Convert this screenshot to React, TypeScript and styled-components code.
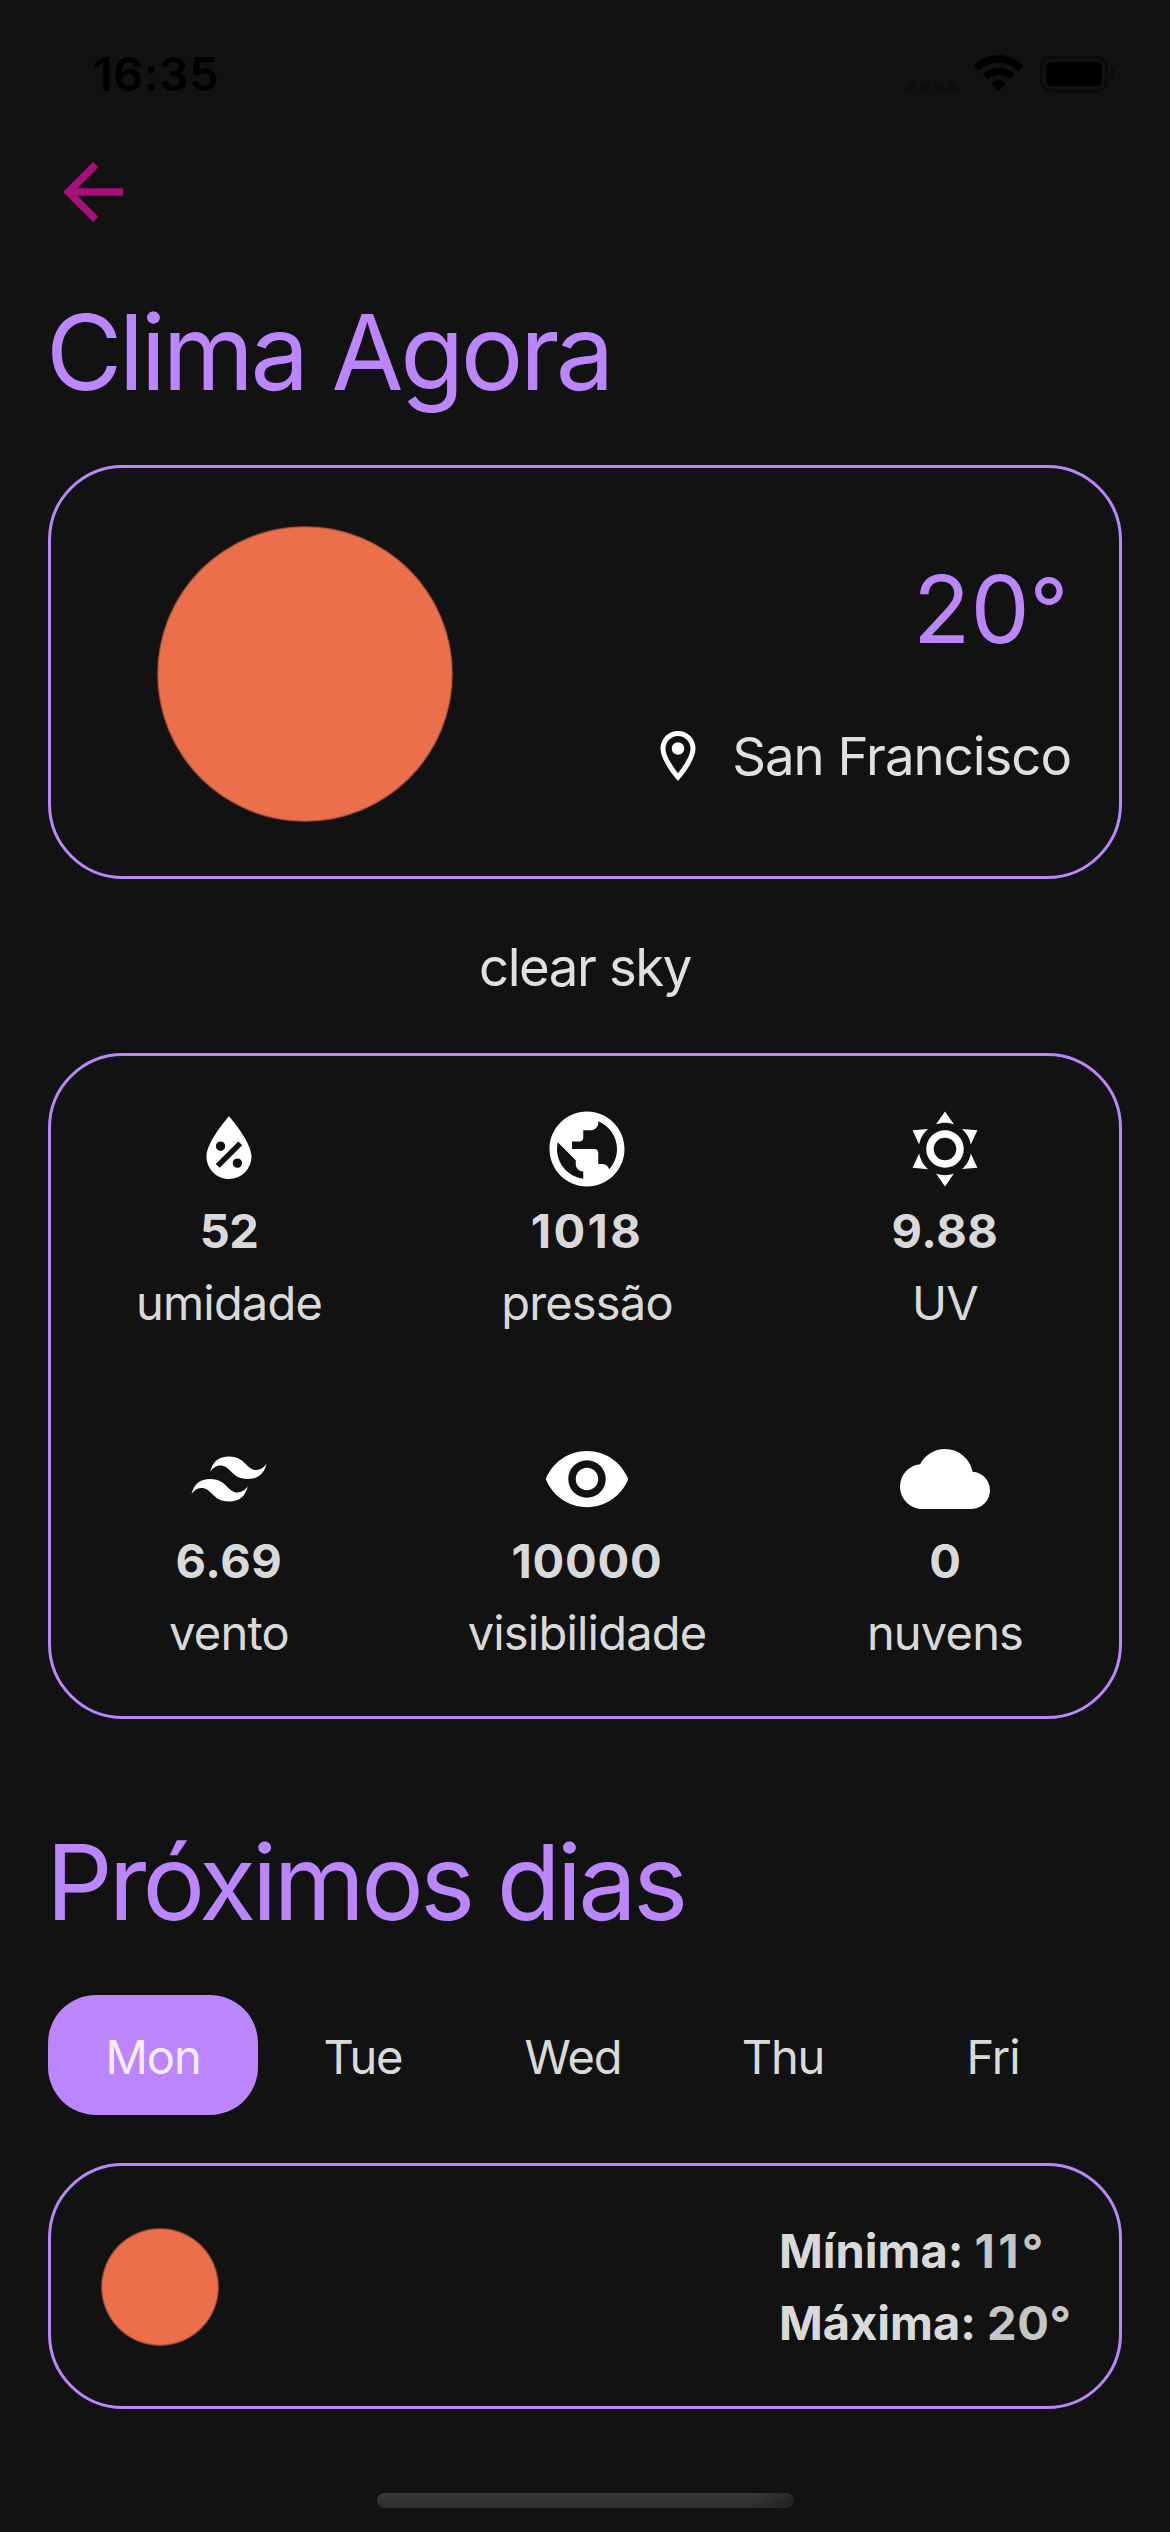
import React from "react";
import styled, { createGlobalStyle } from "styled-components";
import { MdArrowBack, MdCloud, MdOutlineLocationOn, MdPublic, MdVisibility } from "react-icons/md";

const accent = "#bb86fc";
const ink = "rgba(255, 255, 255, 0.87)";

const GlobalStyle = createGlobalStyle`
  * { box-sizing: border-box; }
  body { margin: 0; background: #121212; }
`;

const Screen = styled.main`
  display: flex;
  flex-direction: column;
  width: 1170px;
  height: 2532px;
  overflow: hidden;
  background: #121212;
  color: ${ink};
  font-family: Inter, "Liberation Sans", sans-serif;
  font-size: 47px;
`;

const StatusBar = styled.header`
  display: flex;
  align-items: center;
  justify-content: space-between;
  height: 147px;
  padding: 0 55px 0 93px;
  color: #000;
`;

const Clock = styled.time`
  font-size: 47px;
  font-weight: 600;
  letter-spacing: 0.3px;
  line-height: 58px;
  padding-top: 1px;
`;

const StatusIcons = styled.div`
  display: flex;
  align-items: center;
  gap: 17px;
`;

const Content = styled.div`
  display: flex;
  flex-direction: column;
  padding: 0 48px;
`;

const BackButton = styled.button`
  display: flex;
  width: 90px;
  height: 90px;
  padding: 0;
  border: 0;
  background: none;
  color: #a80f7b;
`;

const Title = styled.h1<{ $top: number; $tracking: number }>`
  margin: ${(p) => p.$top}px 0 48px -2px;
  color: ${accent};
  font-size: 104.5px;
  font-weight: 400;
  letter-spacing: ${(p) => p.$tracking}px;
  line-height: 130px;
`;

const Card = styled.section`
  display: flex;
  border: 3px solid ${accent};
  border-radius: 75px;
`;

const CurrentCard = styled(Card)`
  align-items: center;
  justify-content: space-between;
  height: 414px;
  padding: 4px 48px 0 106px;
`;

const Sun = styled.div<{ $size: number }>`
  width: ${(p) => p.$size}px;
  height: ${(p) => p.$size}px;
  border-radius: 50%;
  background: radial-gradient(closest-side, #eb6f4b calc(100% - 2px), rgba(235, 111, 75, 0.4) 100%);
`;

const CurrentInfo = styled.div`
  display: flex;
  flex-direction: column;
  align-items: flex-end;
  gap: 58px;
  margin-bottom: 8px;
`;

const Temperature = styled.div`
  padding-right: 3px;
  color: ${accent};
  font-size: 94px;
  line-height: 114px;
`;

const Degree = styled.span`
  font-size: 84px;
  line-height: 0;
  vertical-align: 4px;
`;

const Place = styled.div`
  display: flex;
  align-items: center;
  gap: 24px;
  font-size: 52.7px;
  letter-spacing: -1px;
  line-height: 64px;

  svg { color: #fff; }
`;

const Description = styled.p`
  display: flex;
  align-items: center;
  justify-content: center;
  height: 174px;
  margin: 0;
  padding-top: 1px;
  font-size: 52.7px;
  letter-spacing: -1.4px;
`;

const StatsCard = styled(Card)`
  display: grid;
  grid-template-columns: repeat(3, 358px);
  grid-auto-rows: 330px;
  height: 666px;
  padding-top: 48px;
`;

const Stat = styled.div`
  display: flex;
  flex-direction: column;
  align-items: center;
  margin-left: -2px;
  line-height: 72px;

  svg { color: #fff; fill: currentColor; }
`;

const StatValue = styled.strong<{ $tracking: number }>`
  margin-top: 1px;
  font-weight: 700;
  letter-spacing: ${(p) => p.$tracking}px;
`;

const StatLabel = styled.span`
  letter-spacing: -0.8px;
`;

const Days = styled.nav`
  display: flex;
  margin-bottom: 48px;
`;

const Day = styled.button<{ $active: boolean }>`
  width: 210px;
  height: 120px;
  padding: 2px 0 0;
  border: 0;
  border-radius: 48px;
  background: ${(p) => (p.$active ? accent : "transparent")};
  color: ${ink};
  font: inherit;
  letter-spacing: -1.1px;
`;

const ForecastCard = styled(Card)`
  align-items: center;
  justify-content: space-between;
  height: 246px;
  padding: 2px 47px 0 50px;
`;

const Range = styled.div`
  width: 293px;
  font-weight: 700;
  line-height: 72px;
`;

const RangeRow = styled.div`
  white-space: pre;
`;

const RangeValue = styled.span<{ $tracking: number }>`
  color: #c5c5c5;
  letter-spacing: ${(p) => p.$tracking}px;
`;

const HomeIndicator = styled.div`
  width: 417px;
  height: 15px;
  margin: 84px auto 0;
  border-radius: 8px;
  background:
    linear-gradient(to right, rgba(18, 18, 18, 0) 90%, rgba(18, 18, 18, 0.45)),
    linear-gradient(#3a3a3a, #2d2d2d);
`;

const SignalDots = () => (
  <svg width="51" height="36" viewBox="0 0 51 36" fill="#0e0e0e">
    {[0, 14, 28, 42].map((x) => (
      <rect key={x} x={x} y="26.500" width="9" height="9" rx="3" />
    ))}
  </svg>
);

const Wifi = () => (
  <svg width="49" height="37" viewBox="0 0 49 37" fill="#000">
    <path d="M24.500 0C33.800 0 42.300 3.800 48.800 10.400a.9.900 0 0 1 0 1.300L45 15.600a.9.900 0 0 1-1.300 0A27.500 27.500 0 0 0 24.500 7.800 27.500 27.500 0 0 0 5.300 15.600a.9.900 0 0 1-1.300 0L.2 11.700a.9.900 0 0 1 0-1.300C6.700 3.800 15.200 0 24.500 0Z" />
    <path d="M24.500 12.800c5.900 0 11.300 2.200 15.300 6.100a.9.900 0 0 1 0 1.300L36 24a.9.900 0 0 1-1.300 0A15 15 0 0 0 24.500 20.100 15 15 0 0 0 14.300 24a.9.900 0 0 1-1.300 0L9.200 20.200a.9.900 0 0 1 0-1.300c4-3.900 9.400-6.100 15.300-6.100Z" />
    <path d="M24.500 25.300c2.600 0 4.900.9 6.700 2.400a.9.900 0 0 1 0 1.400l-6.100 6.400a.9.900 0 0 1-1.300 0l-6.100-6.400a.9.900 0 0 1 0-1.400c1.900-1.500 4.200-2.400 6.800-2.400Z" />
  </svg>
);

const Battery = () => (
  <svg width="75" height="36" viewBox="0 0 75 36">
    <rect x="1.500" y="1.500" width="65" height="33" rx="9.500" fill="none" stroke="#0b0b0b" strokeWidth="3" />
    <rect x="6" y="6" width="56" height="24" rx="5.500" fill="#000" />
    <path d="M71 12c2.400 1 4 3.300 4 6s-1.600 5-4 6Z" fill="#0b0b0b" />
  </svg>
);

const Glyph = ({ d }: { d: string }) => (
  <svg width="90" height="90" viewBox="0 0 24 24">
    <path d={d} />
  </svg>
);

const waterPercent =
  "M12,3.25C12,3.25 6,10 6,14C6,17.32 8.69,20 12,20A6,6 0 0,0 18,14C18,10 12,3.25 12,3.25M14.47,9.97L15.53,11.03L9.53,17.03L8.47,15.97M9.75,10A1.25,1.25 0 0,1 11,11.25A1.25,1.25 0 0,1 9.75,12.5A1.25,1.25 0 0,1 8.5,11.25A1.25,1.25 0 0,1 9.75,10M14.25,14.5A1.25,1.25 0 0,1 15.5,15.75A1.25,1.25 0 0,1 14.25,17A1.25,1.25 0 0,1 13,15.75A1.25,1.25 0 0,1 14.25,14.5Z";
const weatherSunny =
  "M12,7A5,5 0 0,1 17,12A5,5 0 0,1 12,17A5,5 0 0,1 7,12A5,5 0 0,1 12,7M12,9A3,3 0 0,0 9,12A3,3 0 0,0 12,15A3,3 0 0,0 15,12A3,3 0 0,0 12,9M12,2L14.39,5.42C13.65,5.15 12.84,5 12,5C11.16,5 10.35,5.15 9.61,5.42L12,2M3.34,7L7.5,6.65C6.9,7.16 6.36,7.78 5.94,8.5C5.5,9.24 5.25,10 5.11,10.79L3.34,7M3.36,17L5.12,13.23C5.26,14 5.53,14.78 5.95,15.5C6.37,16.24 6.91,16.86 7.5,17.37L3.36,17M20.65,7L18.88,10.79C18.74,10 18.47,9.23 18.05,8.5C17.63,7.78 17.1,7.15 16.5,6.64L20.65,7M20.64,17L16.5,17.36C17.09,16.85 17.62,16.22 18.04,15.5C18.46,14.77 18.73,14 18.87,13.21L20.64,17M12,22L9.59,18.56C10.33,18.83 11.14,19 12,19C12.82,19 13.63,18.83 14.37,18.56L12,22Z";
const tailwind =
  "M12,6C9.33,6 7.67,7.33 7,10C8,8.67 9.17,8.17 10.5,8.5C11.26,8.69 11.81,9.24 12.41,9.85C13.39,10.85 14.5,12 17,12C19.67,12 21.33,10.67 22,8C21,9.33 19.83,9.83 18.5,9.5C17.74,9.31 17.2,8.76 16.59,8.15C15.61,7.15 14.5,6 12,6M7,12C4.33,12 2.67,13.33 2,16C3,14.67 4.17,14.17 5.5,14.5C6.26,14.69 6.8,15.24 7.41,15.85C8.39,16.85 9.5,18 12,18C14.67,18 16.33,16.67 17,14C16,15.33 14.83,15.83 13.5,15.5C12.74,15.31 12.2,14.76 11.59,14.15C10.61,13.15 9.5,12 7,12Z";

const stats = [
  { label: "umidade", value: "52", tracking: -0.5, icon: <Glyph d={waterPercent} /> },
  { label: "pressão", value: "1018", tracking: 2.4, icon: <MdPublic size={90} /> },
  { label: "UV", value: "9.88", tracking: 0.6, icon: <Glyph d={weatherSunny} /> },
  { label: "vento", value: "6.69", tracking: 0.6, icon: <Glyph d={tailwind} /> },
  { label: "visibilidade", value: "10000", tracking: 0.8, icon: <MdVisibility size={90} /> },
  { label: "nuvens", value: "0", tracking: 0, icon: <MdCloud size={90} /> },
];

const days = ["Mon", "Tue", "Wed", "Thu", "Fri"];

export default function App() {
  const [selected, setSelected] = React.useState("Mon");
  return (
    <Screen>
      <GlobalStyle />
      <StatusBar>
        <Clock>16:35</Clock>
        <StatusIcons>
          <SignalDots />
          <Wifi />
          <Battery />
        </StatusIcons>
      </StatusBar>
      <Content>
        <BackButton aria-label="Voltar">
          <MdArrowBack size={90} />
        </BackButton>
        <Title $top={50} $tracking={-3.5}>Clima Agora</Title>
        <CurrentCard>
          <Sun $size={296} />
          <CurrentInfo>
            <Temperature>
              20<Degree>°</Degree>
            </Temperature>
            <Place>
              <MdOutlineLocationOn size={60} />
              San Francisco
            </Place>
          </CurrentInfo>
        </CurrentCard>
        <Description>clear sky</Description>
        <StatsCard>
          {stats.map((s) => (
            <Stat key={s.label}>
              {s.icon}
              <StatValue $tracking={s.tracking}>{s.value}</StatValue>
              <StatLabel>{s.label}</StatLabel>
            </Stat>
          ))}
        </StatsCard>
        <Title as="h2" $top={98} $tracking={-3.9}>Próximos dias</Title>
        <Days>
          {days.map((d) => (
            <Day key={d} $active={d === selected} onClick={() => setSelected(d)}>
              {d}
            </Day>
          ))}
        </Days>
        <ForecastCard>
          <Sun $size={118} />
          <Range>
            <RangeRow>Mínima: <RangeValue $tracking={3.4}>11°</RangeValue></RangeRow>
            <RangeRow>Máxima: <RangeValue $tracking={0.5}>20°</RangeValue></RangeRow>
          </Range>
        </ForecastCard>
      </Content>
      <HomeIndicator />
    </Screen>
  );
}
